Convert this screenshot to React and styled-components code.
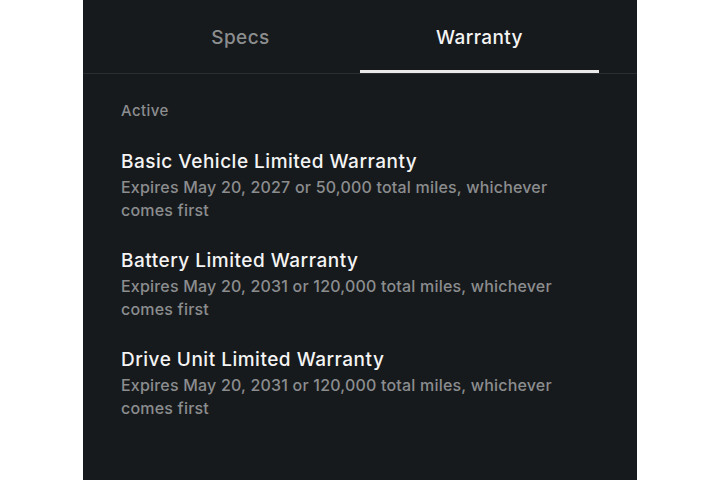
import React, { useState } from "react";
import styled, { createGlobalStyle } from "styled-components";

const Global = createGlobalStyle`
  html, body { margin: 0; padding: 0; background: #ffffff; }
  body { font-family: Inter, "Noto Sans", sans-serif; -webkit-font-smoothing: antialiased; }
`;

const Page = styled.div`
  display: flex;
  height: 480px;
  padding-left: 83px;
`;

const Panel = styled.div`
  width: 554px;
  height: 480px;
  background: #171a1c;
  display: flex;
  flex-direction: column;
`;

const TabBar = styled.div`
  display: flex;
  padding: 0 38px;
  border-bottom: 1px solid #2b2e30;
`;

const Tab = styled.button`
  flex: 1;
  height: 73px;
  background: none;
  border: none;
  padding: 2px 0 0;
  font-family: Inter, "Noto Sans", sans-serif;
  font-size: 19px;
  font-weight: 500;
  letter-spacing: 0.4px;
  color: ${(p) => (p.$active ? "#f4f4f4" : "#8b8d8f")};
  box-shadow: ${(p) => (p.$active ? "inset 0 -3px 0 #e9e9e9" : "none")};
  cursor: pointer;
`;

const Content = styled.div`
  padding: 27px 38px 0;
  display: flex;
  flex-direction: column;
`;

const SectionLabel = styled.div`
  font-size: 15px;
  line-height: 20px;
  font-weight: 500;
  letter-spacing: 0.4px;
  color: #8b8d8f;
  margin-bottom: 29px;
`;

const List = styled.div`
  display: flex;
  flex-direction: column;
  gap: 27px;
`;

const Item = styled.div`
  display: flex;
  flex-direction: column;
  gap: 2px;
`;

const Title = styled.div`
  font-size: 19px;
  line-height: 24px;
  font-weight: 500;
  letter-spacing: 0.5px;
  color: #f4f4f4;
`;

const Detail = styled.div`
  font-size: 16px;
  line-height: 23px;
  font-weight: 500;
  letter-spacing: 0.2px;
  color: #8b8d8f;
  max-width: 450px;
`;

const warranties = [
  { title: "Basic Vehicle Limited Warranty", detail: "Expires May 20, 2027 or 50,000 total miles, whichever comes first" },
  { title: "Battery Limited Warranty", detail: "Expires May 20, 2031 or 120,000 total miles, whichever comes first" },
  { title: "Drive Unit Limited Warranty", detail: "Expires May 20, 2031 or 120,000 total miles, whichever comes first" },
];

export default function App() {
  const [tab, setTab] = useState("warranty");
  return (
    <>
      <Global />
      <Page>
        <Panel>
          <TabBar>
            <Tab $active={tab === "specs"} onClick={() => setTab("specs")}>Specs</Tab>
            <Tab $active={tab === "warranty"} onClick={() => setTab("warranty")}>Warranty</Tab>
          </TabBar>
          <Content>
            <SectionLabel>Active</SectionLabel>
            <List>
              {warranties.map((w) => (
                <Item key={w.title}>
                  <Title>{w.title}</Title>
                  <Detail>{w.detail}</Detail>
                </Item>
              ))}
            </List>
          </Content>
        </Panel>
      </Page>
    </>
  );
}
